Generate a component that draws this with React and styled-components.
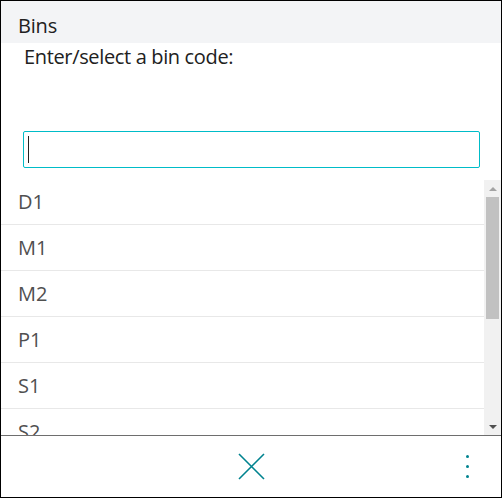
import React from "react";
import styled, { createGlobalStyle } from "styled-components";

const Global = createGlobalStyle`
  html, body { margin: 0; padding: 0; background: #fff; }
  * { box-sizing: border-box; }
`;

const Frame = styled.div`
  width: 502px;
  height: 498px;
  border: 1px solid #000;
  display: flex;
  flex-direction: column;
  font-family: "Open Sans", "Noto Sans", sans-serif;
  background: #fff;
`;

const Header = styled.div`
  height: 42px;
  flex: none;
  background: #f3f4f6;
  padding: 11px 0 0 17px;
  font-size: 20px;
  line-height: 27px;
  letter-spacing: -0.2px;
  color: #212121;
`;

const Prompt = styled.div`
  flex: none;
  padding: 0 0 0 23px;
  font-size: 20px;
  line-height: 27px;
  letter-spacing: -0.35px;
  color: #212121;
  height: 88px;
`;

const InputWrap = styled.div`
  position: relative;
  flex: none;
  margin: 0 21px 0 22px;
  height: 37px;
`;

const Field = styled.input`
  display: block;
  width: 100%;
  height: 100%;
  margin: 0;
  border: 1px solid #00bcc8;
  border-radius: 2px;
  box-shadow: none;
  outline: none;
  background: #fff;
  padding: 0 4px;
  font-family: inherit;
  font-size: 18px;
  caret-color: transparent;
`;

const Caret = styled.span`
  position: absolute;
  left: 5px;
  top: 5px;
  width: 1px;
  height: 27px;
  background: #222;
`;

const ListArea = styled.div`
  flex: 1;
  display: flex;
  margin-top: 10px;
  min-height: 0;
  border-bottom: 1px solid #6e6e6e;
`;

const List = styled.div`
  flex: 1;
  overflow: hidden;
  padding-top: 1px;
`;

const Row = styled.div`
  height: 46px;
  flex: none;
  border-bottom: 1px solid #e8e8e8;
  padding-left: 17px;
  display: flex;
  align-items: center;
  font-size: 20px;
  color: #505050;
`;

const ScrollBar = styled.div`
  width: 17px;
  flex: none;
  background: #f1f1f1;
  display: flex;
  flex-direction: column;
  margin-top: 2px;
`;

const ArrowButton = styled.div`
  height: 17px;
  flex: none;
  display: flex;
  align-items: center;
  justify-content: center;
`;

const Arrow = styled.span`
  width: 0;
  height: 0;
  border-left: 4px solid transparent;
  border-right: 4px solid transparent;
  ${(p) =>
    p.$up
      ? `border-bottom: 4px solid #a3a3a3;`
      : `border-top: 4px solid #505050;`}
`;

const Track = styled.div`
  flex: 1;
  padding: 0 2px;
`;

const Thumb = styled.div`
  height: 122px;
  background: #c1c1c1;
`;

const Footer = styled.div`
  flex: none;
  height: 61px;
  display: grid;
  grid-template-columns: 1fr auto 1fr;
  align-items: center;
`;

const CloseButton = styled.button`
  grid-column: 2;
  border: none;
  background: none;
  padding: 0;
  width: 28px;
  height: 28px;
  display: flex;
  align-items: center;
  justify-content: center;
  cursor: pointer;
`;

const MoreButton = styled.button`
  grid-column: 3;
  justify-self: end;
  margin-right: 31px;
  border: none;
  background: none;
  padding: 0;
  width: 5px;
  height: 23px;
  display: flex;
  flex-direction: column;
  align-items: center;
  justify-content: space-between;
  cursor: pointer;
`;

const Dot = styled.span`
  width: 3px;
  height: 3px;
  border-radius: 50%;
  background: #00838f;
`;

const bins = ["D1", "M1", "M2", "P1", "S1", "S2"];

export default function App() {
  return (
    <>
      <Global />
      <Frame>
        <Header>Bins</Header>
        <Prompt>Enter/select a bin code:</Prompt>
        <InputWrap>
          <Field aria-label="Bin code" />
          <Caret />
        </InputWrap>
        <ListArea>
          <List>
            {bins.map((b) => (
              <Row key={b}>{b}</Row>
            ))}
          </List>
          <ScrollBar>
            <ArrowButton>
              <Arrow $up />
            </ArrowButton>
            <Track>
              <Thumb />
            </Track>
            <ArrowButton>
              <Arrow />
            </ArrowButton>
          </ScrollBar>
        </ListArea>
        <Footer>
          <CloseButton aria-label="Close">
            <svg width="27" height="27" viewBox="0 0 27 27">
              <path d="M1 1L26 26M26 1L1 26" stroke="#00838f" strokeWidth="1.6" fill="none" />
            </svg>
          </CloseButton>
          <MoreButton aria-label="More">
            <Dot />
            <Dot />
            <Dot />
          </MoreButton>
        </Footer>
      </Frame>
    </>
  );
}
